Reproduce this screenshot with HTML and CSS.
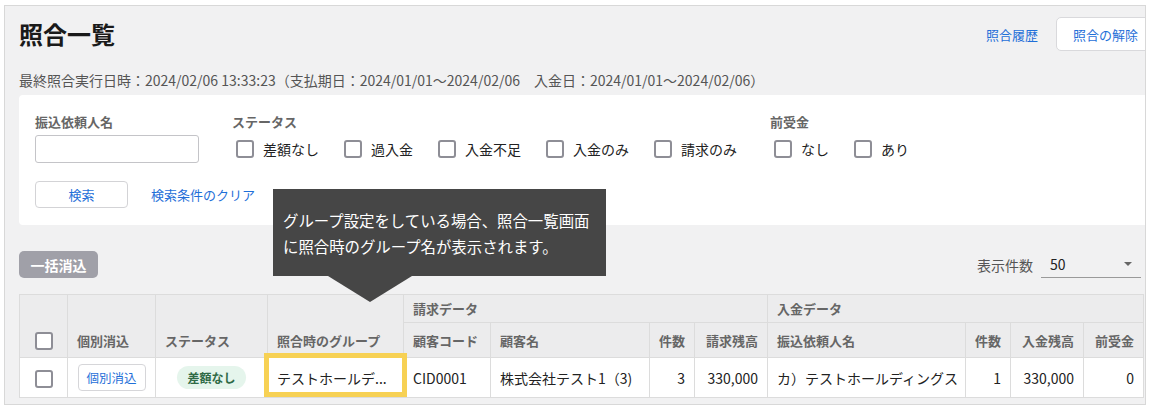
FILE: index.html
```html
<!DOCTYPE html>
<html lang="ja">
<head>
    <meta charset="UTF-8">
    <meta name="viewport" content="width=device-width, initial-scale=1.0">
    <title>照合一覧</title>
    <link rel="stylesheet" href="styles.css">
</head>
<body>
    <div class="frame">
        <header class="page-head">
            <h1>照合一覧</h1>
            <div class="head-actions">
                <a href="#" class="link">照合履歴</a>
                <button class="btn-outline">照合の解除</button>
            </div>
        </header>

        <p class="last-run">最終照合実行日時：2024/02/06 13:33:23（支払期日：2024/01/01～2024/02/06　入金日：2024/01/01～2024/02/06）</p>

        <!-- Search conditions -->
        <section class="filter-panel">
            <div class="filter-row">
                <div class="field field-name">
                    <div class="field-label">振込依頼人名</div>
                    <input type="text" class="text-input">
                </div>
                <div class="field">
                    <div class="field-label">ステータス</div>
                    <div class="check-group">
                        <label class="check"><span class="box"></span>差額なし</label>
                        <label class="check"><span class="box"></span>過入金</label>
                        <label class="check"><span class="box"></span>入金不足</label>
                        <label class="check"><span class="box"></span>入金のみ</label>
                        <label class="check"><span class="box"></span>請求のみ</label>
                    </div>
                </div>
                <div class="field">
                    <div class="field-label">前受金</div>
                    <div class="check-group">
                        <label class="check"><span class="box"></span>なし</label>
                        <label class="check"><span class="box"></span>あり</label>
                    </div>
                </div>
            </div>
            <div class="search-row">
                <button class="btn-search">検索</button>
                <a href="#" class="link">検索条件のクリア</a>
            </div>
        </section>

        <div class="list-toolbar">
            <button class="btn-bulk">一括消込</button>
            <div class="per-page">
                <span class="per-page-label">表示件数</span>
                <div class="select">50<span class="caret"></span></div>
            </div>
        </div>

        <table class="result-table">
            <colgroup>
                <col style="width: 48px">
                <col style="width: 88px">
                <col style="width: 112px">
                <col style="width: 136px">
                <col style="width: 87px">
                <col style="width: 159px">
                <col style="width: 45px">
                <col style="width: 73px">
                <col style="width: 198px">
                <col style="width: 45px">
                <col style="width: 73px">
                <col style="width: 60px">
            </colgroup>
            <thead>
                <tr class="head-group">
                    <th rowspan="2" class="col-check"><span class="box"></span></th>
                    <th rowspan="2">個別消込</th>
                    <th rowspan="2">ステータス</th>
                    <th rowspan="2">照合時のグループ</th>
                    <th colspan="4">請求データ</th>
                    <th colspan="4">入金データ</th>
                </tr>
                <tr class="head-cols">
                    <th>顧客コード</th>
                    <th>顧客名</th>
                    <th class="num">件数</th>
                    <th class="num">請求残高</th>
                    <th>振込依頼人名</th>
                    <th class="num">件数</th>
                    <th class="num">入金残高</th>
                    <th class="num">前受金</th>
                </tr>
            </thead>
            <tbody>
                <tr>
                    <td class="col-check"><span class="box"></span></td>
                    <td class="center"><button class="btn-row">個別消込</button></td>
                    <td class="center"><span class="pill">差額なし</span></td>
                    <td class="highlight">テストホールデ...</td>
                    <td>CID0001</td>
                    <td>株式会社テスト1（3)</td>
                    <td class="num">3</td>
                    <td class="num">330,000</td>
                    <td>カ）テストホールディングス</td>
                    <td class="num">1</td>
                    <td class="num">330,000</td>
                    <td class="num">0</td>
                </tr>
            </tbody>
        </table>

        <!-- Help balloon over the group column -->
        <div class="tooltip">グループ設定をしている場合、照合一覧画面<br>に照合時のグループ名が表示されます。</div>
    </div>
</body>
</html>
```

FILE: styles.css
```css
/* General reset */
* {
    margin: 0;
    padding: 0;
    box-sizing: border-box;
}

body {
    font-family: "Noto Sans CJK JP", "Noto Sans", sans-serif;
    background-color: #ffffff;
    color: #222222;
    font-size: 14px;
}

.frame {
    position: relative;
    width: 1142px;
    margin: 5px 0 0 4px;
    padding: 0 0 6px 14px;
    border: 1px solid #d8d8d8;
    background-color: #f1f1f2;
    overflow: hidden;
}

.page-head {
    display: flex;
    align-items: center;
    justify-content: space-between;
    height: 34px;
    margin-top: 11px;
}

.page-head h1 {
    font-size: 24px;
    font-weight: 700;
    color: #1a1a1a;
    line-height: 34px;
}

.head-actions {
    display: flex;
    align-items: center;
    gap: 18px;
    margin-right: -10px;
}

.link {
    color: #1f6fd8;
    font-size: 13px;
    text-decoration: none;
}

.btn-outline {
    height: 34px;
    padding: 0 16px;
    border: 1px solid #d9d9dc;
    border-radius: 5px;
    background-color: #ffffff;
    color: #1f6fd8;
    font-family: inherit;
    font-size: 13px;
}

.last-run {
    margin-top: 19px;
    font-size: 14px;
    line-height: 20px;
    color: #555555;
}

/* Search panel */
.filter-panel {
    margin-top: 5px;
    padding: 17px 0 17px 16px;
    background-color: #ffffff;
    border-radius: 4px 0 0 4px;
}

.filter-row {
    display: flex;
    gap: 33px;
}

.field-name {
    width: 164px;
}

.field-label {
    font-size: 13px;
    font-weight: 700;
    color: #666666;
    line-height: 20px;
    margin-bottom: 3px;
}

.text-input {
    width: 164px;
    height: 28px;
    border: 1px solid #c4c4c8;
    border-radius: 3px;
}

.check-group {
    display: flex;
    align-items: center;
    gap: 21px;
    height: 28px;
}

.check {
    display: flex;
    align-items: center;
    gap: 9px;
    font-size: 14px;
    color: #222222;
}

.check .box {
    margin-left: 4px;
}

.box {
    display: inline-block;
    width: 18px;
    height: 18px;
    border: 2px solid #8e8e96;
    border-radius: 3px;
    background-color: #ffffff;
}

.search-row {
    display: flex;
    align-items: center;
    gap: 23px;
    margin-top: 18px;
}

.btn-search {
    width: 93px;
    height: 27px;
    border: 1px solid #d3d3d6;
    border-radius: 4px;
    background-color: #ffffff;
    color: #1f6fd8;
    font-family: inherit;
    font-size: 13px;
}

/* Toolbar above the table */
.list-toolbar {
    display: flex;
    align-items: center;
    justify-content: space-between;
    margin-top: 26px;
    padding-right: 4px;
}

.btn-bulk {
    width: 79px;
    height: 27px;
    border: none;
    border-radius: 5px;
    background-color: #a0a0a8;
    color: #ffffff;
    font-family: inherit;
    font-size: 14px;
    font-weight: 700;
}

.per-page {
    display: flex;
    align-items: center;
    gap: 8px;
}

.per-page-label {
    font-size: 14px;
    color: #555555;
}

.select {
    display: flex;
    align-items: center;
    justify-content: space-between;
    width: 100px;
    height: 27px;
    padding: 0 9px;
    border-bottom: 1px solid #9a9a9a;
    font-size: 14px;
    color: #222222;
}

.caret {
    width: 0;
    height: 0;
    border-left: 4px solid transparent;
    border-right: 4px solid transparent;
    border-top: 4px solid #666666;
}

/* Result table */
.result-table {
    margin-top: 16px;
    width: 1125px;
    table-layout: fixed;
    border-collapse: collapse;
}

.result-table th,
.result-table td {
    border: 1px solid #dcdcdc;
    padding: 0 9px;
    text-align: left;
    white-space: nowrap;
}

.result-table th {
    background-color: #ececed;
    color: #666666;
    font-size: 13px;
    font-weight: 700;
    vertical-align: bottom;
    padding-bottom: 7px;
}

.head-group {
    height: 28px;
}

.head-group th[colspan] {
    vertical-align: middle;
    padding-bottom: 0;
}

.head-cols {
    height: 35px;
}

.result-table tbody tr {
    height: 40px;
}

.result-table td {
    background-color: #ffffff;
    font-size: 14px;
    color: #222222;
}

.result-table .num {
    text-align: right;
}

.result-table .center {
    text-align: center;
}

.result-table .col-check {
    text-align: center;
    padding: 0;
}

.result-table th.col-check {
    padding-bottom: 7px;
}

.col-check .box {
    vertical-align: middle;
}

.btn-row {
    width: 68px;
    height: 27px;
    border: 1px solid #d6d6d9;
    border-radius: 4px;
    background-color: #ffffff;
    color: #1f6fd8;
    font-family: inherit;
    font-size: 12.5px;
}

.pill {
    display: inline-block;
    width: 69px;
    height: 23px;
    line-height: 23px;
    border-radius: 12px;
    background-color: #e5f5ec;
    color: #2f6a46;
    font-size: 12px;
    font-weight: 700;
    text-align: center;
}

.highlight {
    position: relative;
}

.highlight::after {
    content: "";
    position: absolute;
    top: -5px;
    bottom: 0;
    left: -4px;
    right: -4px;
    border: 5px solid #f7d154;
}

.tooltip {
    position: absolute;
    left: 268px;
    top: 183px;
    width: 333px;
    height: 87px;
    padding: 18px 0 0 10px;
    background-color: #464646;
    color: #ffffff;
    font-size: 15.4px;
    line-height: 26px;
    white-space: nowrap;
}

.tooltip::after {
    content: "";
    position: absolute;
    left: 55px;
    top: 100%;
    border-left: 42px solid transparent;
    border-right: 42px solid transparent;
    border-top: 26px solid #464646;
}
```
